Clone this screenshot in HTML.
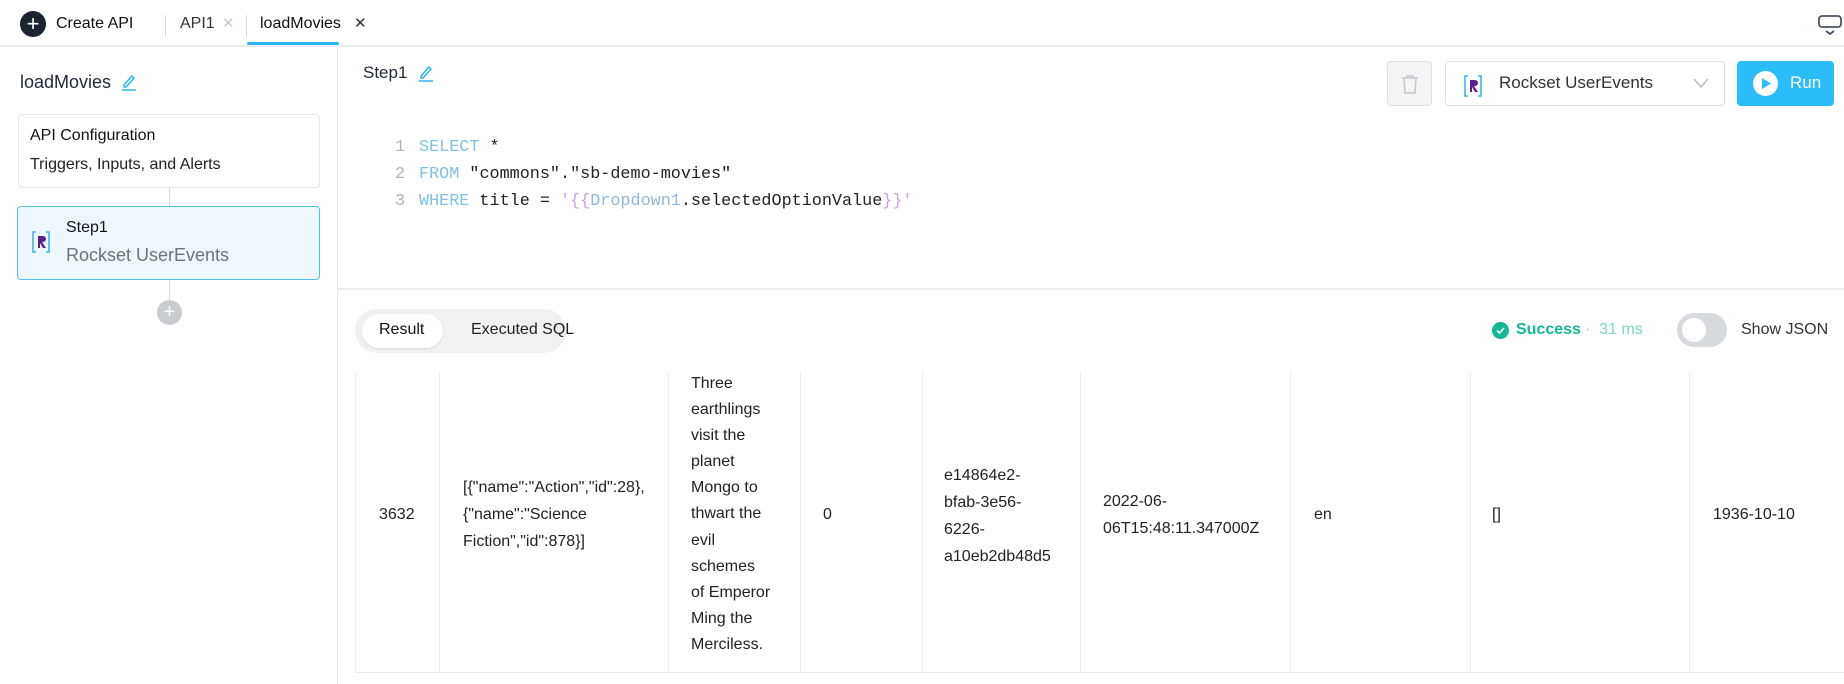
<!DOCTYPE html>
<html><head><meta charset="utf-8"><style>
*{box-sizing:border-box;margin:0;padding:0}
body{width:1844px;height:684px;overflow:hidden;background:#fff;font-family:"Liberation Sans",sans-serif;color:#1f2937;position:relative}
.a{position:absolute;white-space:nowrap}
.mono{font-family:"Liberation Mono",monospace;font-size:16.8px}
.t{font-size:16px;color:#222;line-height:27px}
.vl{position:absolute;top:372px;height:301px;width:1px;background:#ececec}
</style></head><body>
<div class="a" style="left:0;top:45px;width:1844px;height:2px;background:#eceeef"></div>
<div class="a" style="left:20px;top:11px;width:26px;height:26px;border-radius:50%;background:#1b2330;color:#fff;font-size:22px;line-height:25px;text-align:center">+</div>
<div class="a" style="left:56px;top:15px;font-size:16px;color:#111">Create API</div>
<div class="a" style="left:165px;top:15px;width:1px;height:22px;background:#d8dadd"></div>
<div class="a" style="left:180px;top:15px;font-size:16px;color:#333">API1</div>
<div class="a" style="left:222px;top:14px;font-size:15px;color:#ccc">✕</div>
<div class="a" style="left:246px;top:15px;width:1px;height:22px;background:#d8dadd"></div>
<div class="a" style="left:260px;top:15px;font-size:16px;color:#111">loadMovies</div>
<div class="a" style="left:354px;top:14px;font-size:15px;color:#333">✕</div>
<div class="a" style="left:247px;top:42px;width:92px;height:3px;background:#2bb6f6;border-radius:2px"></div>
<svg class="a" style="left:1817px;top:14px" width="26" height="26" viewBox="0 0 26 26"><rect x="2" y="2" width="22" height="11" rx="3" fill="none" stroke="#4b5563" stroke-width="1.8"/><path d="M9 17l4 3 4-3" fill="none" stroke="#4b5563" stroke-width="1.8"/></svg>
<div class="a" style="left:337px;top:47px;width:1px;height:637px;background:#e5e7eb"></div>
<div class="a" style="left:20px;top:72px;font-size:18px;color:#1f2937">loadMovies</div>
<svg class="a" style="left:120px;top:72px" width="18" height="20" viewBox="0 0 18 20"><path d="M4 13l8-9 2 2-8 9H4z" fill="none" stroke="#2bb6f6" stroke-width="1.5"/><path d="M2 18h14" stroke="#2bb6f6" stroke-width="1.5"/></svg>
<div class="a" style="left:18px;top:114px;width:302px;height:74px;border:1px solid #e3e5e8;border-radius:4px"></div>
<div class="a" style="left:30px;top:127px;font-size:16px;color:#111">API Configuration</div>
<div class="a" style="left:30px;top:156px;font-size:16px;color:#222">Triggers, Inputs, and Alerts</div>
<div class="a" style="left:169px;top:188px;width:1px;height:19px;background:#d8dadd"></div>
<div class="a" style="left:17px;top:206px;width:303px;height:74px;border:1.5px solid #4fc2f0;border-radius:4px;background:#eef7fd"></div>
<svg class="a" style="left:31px;top:230px" width="20" height="24" viewBox="0 0 20 24"><path d="M5 2H2v20h3M15 2h3v20h-3" fill="none" stroke="#3db5e8" stroke-width="1.6"/><path d="M7 6h5a3 3 0 0 1 0 6h-1l4 6h-3l-3-5v5H7z" fill="#5b1f8f"/></svg>
<div class="a" style="left:66px;top:219px;font-size:16px;color:#111">Step1</div>
<div class="a" style="left:66px;top:245px;font-size:18px;color:#6b7280">Rockset UserEvents</div>
<div class="a" style="left:169px;top:280px;width:1px;height:20px;background:#d8dadd"></div>
<div class="a" style="left:157px;top:300px;width:25px;height:25px;border-radius:50%;background:#c8cbd0;color:#fff;font-size:20px;line-height:24px;text-align:center">+</div>
<div class="a" style="left:363px;top:63px;font-size:17px;color:#1f2937">Step1</div>
<svg class="a" style="left:417px;top:63px" width="18" height="20" viewBox="0 0 18 20"><path d="M4 13l8-9 2 2-8 9H4z" fill="none" stroke="#2bb6f6" stroke-width="1.5"/><path d="M2 18h14" stroke="#2bb6f6" stroke-width="1.5"/></svg>
<div class="a" style="left:1387px;top:61px;width:45px;height:45px;border:1px solid #dcdfe3;border-radius:4px;background:#f3f4f5"></div>
<svg class="a" style="left:1399px;top:73px" width="22" height="22" viewBox="0 0 22 22"><path d="M3 5h16M8 5V3h6v2M5 5l1 15h10l1-15" fill="none" stroke="#c4c7cc" stroke-width="1.6"/></svg>
<div class="a" style="left:1445px;top:61px;width:280px;height:45px;border:1px solid #dcdfe3;border-radius:4px"></div>
<svg class="a" style="left:1463px;top:74px" width="20" height="24" viewBox="0 0 20 24"><path d="M5 2H2v20h3M15 2h3v20h-3" fill="none" stroke="#3db5e8" stroke-width="1.6"/><path d="M7 6h5a3 3 0 0 1 0 6h-1l4 6h-3l-3-5v5H7z" fill="#5b1f8f"/></svg>
<div class="a" style="left:1499px;top:73px;font-size:17px;color:#333">Rockset UserEvents</div>
<svg class="a" style="left:1693px;top:77px" width="16" height="12" viewBox="0 0 16 12"><path d="M1 2l7 8 7-8" fill="none" stroke="#bbb" stroke-width="1.4"/></svg>
<div class="a" style="left:1737px;top:61px;width:97px;height:45px;border-radius:4px;background:#2bbcfb"></div>
<div class="a" style="left:1753px;top:71px;width:25px;height:25px;border-radius:50%;background:#fff"></div>
<svg class="a" style="left:1761px;top:77px" width="11" height="13" viewBox="0 0 11 13"><path d="M1 1l9 5.5L1 12z" fill="#2bbcfb"/></svg>
<div class="a" style="left:1790px;top:73px;font-size:17px;color:#fff">Run</div>
<div class="a mono" style="left:395px;top:134px;line-height:27px;color:#b0b4ba">1<br>2<br>3</div>
<div class="a mono" style="left:419px;top:134px;line-height:27px;color:#222"><span style="color:#7cc3e6">SELECT</span> *<br><span style="color:#7cc3e6">FROM</span> "commons"."sb-demo-movies"<br><span style="color:#7cc3e6">WHERE</span> title = <span style="color:#c9a0e0">'{{</span><span style="color:#8fb8db">Dropdown1</span>.selectedOptionValue<span style="color:#c9a0e0">}}'</span></div>
<div class="a" style="left:338px;top:288px;width:1506px;height:2px;background:#eceeef"></div>
<div class="a" style="left:355px;top:309px;width:211px;height:44px;border-radius:22px;background:#f0f1f3"></div>
<div class="a" style="left:362px;top:314px;width:81px;height:34px;border-radius:17px;background:#fff;box-shadow:0 1px 2px rgba(0,0,0,.1)"></div>
<div class="a" style="left:379px;top:321px;font-size:16px;color:#111">Result</div>
<div class="a" style="left:471px;top:321px;font-size:16px;color:#222">Executed SQL</div>
<div class="a" style="left:1492px;top:322px;width:17px;height:17px;border-radius:50%;background:#13b896"></div>
<svg class="a" style="left:1495px;top:325px" width="11" height="11" viewBox="0 0 11 11"><path d="M2 5.5l2.5 2.5L9 3" fill="none" stroke="#fff" stroke-width="1.6"/></svg>
<div class="a" style="left:1516px;top:321px;font-size:16px;color:#13b896;font-weight:bold">Success</div>
<div class="a" style="left:1585px;top:321px;font-size:16px;color:#7fd6c3">·&nbsp;&nbsp;31 ms</div>
<div class="a" style="left:1677px;top:313px;width:50px;height:34px;border-radius:17px;background:#d7dade"></div>
<div class="a" style="left:1682px;top:318px;width:24px;height:24px;border-radius:50%;background:#fff"></div>
<div class="a" style="left:1741px;top:321px;font-size:16px;color:#333">Show JSON</div>
<div class="a" style="left:355px;top:372px;width:1489px;height:301px;border-left:1px solid #ececec;border-bottom:1px solid #ececec"></div>
<div class="vl" style="left:439px"></div><div class="vl" style="left:668px"></div><div class="vl" style="left:800px"></div><div class="vl" style="left:922px"></div><div class="vl" style="left:1080px"></div><div class="vl" style="left:1290px"></div><div class="vl" style="left:1470px"></div><div class="vl" style="left:1689px"></div>
<div class="a t" style="left:379px;top:501px">3632</div>
<div class="a t" style="left:463px;top:474px">[{"name":"Action","id":28},<br>{"name":"Science<br>Fiction","id":878}]</div>
<div class="a t" style="left:691px;top:371px;line-height:26.1px">Three<br>earthlings<br>visit the<br>planet<br>Mongo to<br>thwart the<br>evil<br>schemes<br>of Emperor<br>Ming the<br>Merciless.</div>
<div class="a t" style="left:823px;top:501px">0</div>
<div class="a t" style="left:944px;top:462px">e14864e2-<br>bfab-3e56-<br>6226-<br>a10eb2db48d5</div>
<div class="a t" style="left:1103px;top:488px">2022-06-<br>06T15:48:11.347000Z</div>
<div class="a t" style="left:1314px;top:501px">en</div>
<div class="a t" style="left:1492px;top:501px">[]</div>
<div class="a t" style="left:1713px;top:501px">1936-10-10</div>
</body></html>
